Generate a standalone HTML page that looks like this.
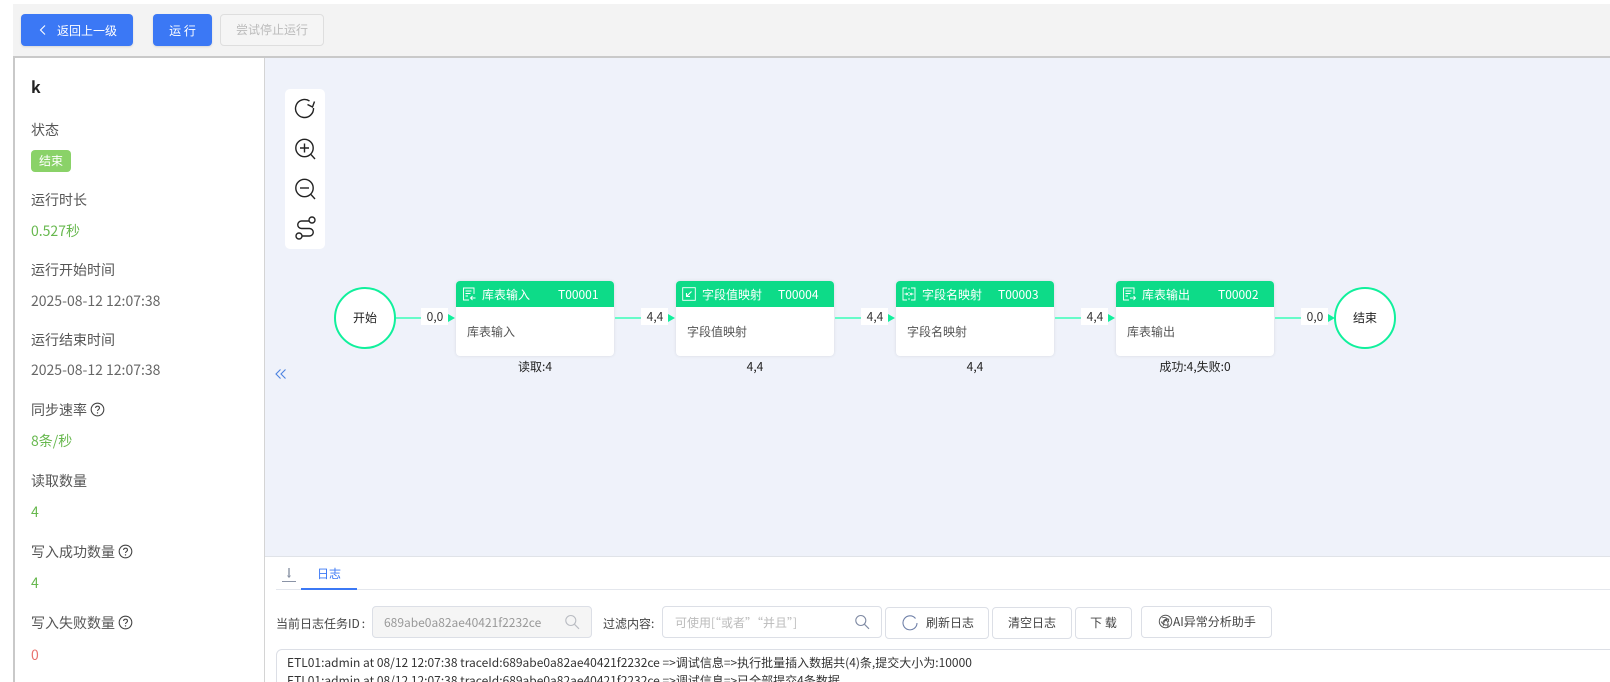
<!DOCTYPE html>
<html lang="zh">
<head>
<meta charset="utf-8">
<title>k</title>
<style>
html,body{margin:0;padding:0;background:#fff;width:1610px;height:682px;overflow:hidden;}
body{font-family:"Noto Sans CJK SC","Liberation Sans",sans-serif;font-size:14px;color:#333;}
#wrap{position:absolute;left:0;top:0;width:1610px;height:682px;overflow:hidden;contain:paint;}
.a{position:absolute;box-sizing:border-box;}
.t{position:absolute;white-space:nowrap;line-height:20px;height:20px;}
.btn{position:absolute;box-sizing:border-box;border-radius:4px;text-align:center;font-size:12px;white-space:nowrap;}
.pri{background:#3b78f5;color:#fff;height:32px;top:14px;line-height:33px;box-shadow:0 1px 2px rgba(0,0,0,.12);}
.def{background:#fff;border:1px solid #dcdfe6;color:#444;height:32px;line-height:30px;}
.lab{color:#555;font-size:14px;left:31px;}
.val{color:#67b84e;font-size:14px;left:31px;}
.dat{color:#666;font-size:14px;left:31px;}
.node{position:absolute;top:281px;width:158px;height:75px;background:#fff;border-radius:4px;box-shadow:0 0 3px rgba(0,0,0,.1);}
.head{position:absolute;left:0;top:0;width:158px;height:26px;background:#0ddb88;border-radius:4px 4px 0 0;color:#fff;font-size:12px;line-height:27px;}
.head span{position:absolute;white-space:nowrap;top:0;}
.body{position:absolute;left:11px;top:42px;font-size:12px;color:#555;line-height:18px;white-space:nowrap;}
.cnt{position:absolute;top:358px;font-size:12px;color:#222;width:158px;text-align:center;line-height:18px;white-space:nowrap;}
.circ{position:absolute;box-sizing:border-box;width:62px;height:62px;top:287px;border:2.5px solid #10f09c;border-radius:50%;background:#fff;text-align:center;line-height:57px;font-size:12px;color:#222;}
.line{position:absolute;height:2px;top:317px;background:#66fbc8;}
.elab{position:absolute;top:308px;height:17px;background:#fff;text-align:center;font-size:12px;line-height:18px;color:#333;padding-left:1px;box-sizing:border-box;}
.arr{position:absolute;top:314px;width:0;height:0;border-left:7px solid #10f09c;border-top:4px solid transparent;border-bottom:4px solid transparent;}
.ic{position:absolute;}
.q{position:absolute;}
</style>
</head>
<body>
<div id="wrap">
<div class="a" style="left:13px;top:4px;width:1597px;height:52px;background:#f3f3f3;"></div>
<div class="a" style="left:13px;top:56px;width:1597px;height:2px;background:#c9c9c9;"></div>

<div class="btn pri" style="left:21px;width:112px;">
  <svg class="ic" style="left:16px;top:10px" width="12" height="12" viewBox="0 0 12 12"><path d="M8 1.500 3.500 6 8 10.500" fill="none" stroke="#fff" stroke-width="1.100"/></svg>
  <span style="position:absolute;left:36px;top:0;">返回上一级</span>
</div>
<div class="btn pri" style="left:153px;width:59px;">运 行</div>
<div class="btn" style="left:220px;top:14px;width:104px;height:32px;line-height:30px;border:1px solid #dedede;background:#f5f5f5;color:#bbb;">尝试停止运行</div>

<!-- side panel -->
<div class="a" style="left:13px;top:58px;width:2px;height:624px;background:#c9c9c9;"></div>
<div class="a" style="left:15px;top:58px;width:249px;height:624px;background:#fff;"></div>
<div class="a" style="left:264px;top:58px;width:1px;height:624px;background:#d4d4d4;"></div>

<div class="t" style="left:31px;top:76px;font-size:16px;font-weight:700;color:#222;">k</div>
<div class="t lab" style="top:120px;">状态</div>
<div class="a" style="left:31px;top:150px;width:40px;height:22px;background:#8ad268;border-radius:4px;color:#fff;font-size:12px;text-align:center;line-height:22px;">结束</div>
<div class="t lab" style="top:190px;">运行时长</div>
<div class="t val" style="top:221px;">0.527秒</div>
<div class="t lab" style="top:260px;">运行开始时间</div>
<div class="t dat" style="top:291px;">2025-08-12 12:07:38</div>
<div class="t lab" style="top:330px;">运行结束时间</div>
<div class="t dat" style="top:360px;">2025-08-12 12:07:38</div>
<div class="t lab" style="top:400px;">同步速率</div>
<svg class="q" style="left:90px;top:402px" width="15" height="15" viewBox="0 0 15 15"><circle cx="7.500" cy="7.500" r="6.300" fill="none" stroke="#444" stroke-width="1.100"/><path d="M5.600 6c0-2.400 3.900-2.400 3.900 0 0 1.400-2 1.400-2 3" fill="none" stroke="#444" stroke-width="1.100"/><circle cx="7.500" cy="10.900" r=".7" fill="#444"/></svg>
<div class="t val" style="top:431px;">8条/秒</div>
<div class="t lab" style="top:471px;">读取数量</div>
<div class="t val" style="top:502px;">4</div>
<div class="t lab" style="top:542px;">写入成功数量</div>
<svg class="q" style="left:118px;top:544px" width="15" height="15" viewBox="0 0 15 15"><circle cx="7.500" cy="7.500" r="6.300" fill="none" stroke="#444" stroke-width="1.100"/><path d="M5.600 6c0-2.400 3.900-2.400 3.900 0 0 1.400-2 1.400-2 3" fill="none" stroke="#444" stroke-width="1.100"/><circle cx="7.500" cy="10.900" r=".7" fill="#444"/></svg>
<div class="t val" style="top:573px;">4</div>
<div class="t lab" style="top:613px;">写入失败数量</div>
<svg class="q" style="left:118px;top:615px" width="15" height="15" viewBox="0 0 15 15"><circle cx="7.500" cy="7.500" r="6.300" fill="none" stroke="#444" stroke-width="1.100"/><path d="M5.600 6c0-2.400 3.900-2.400 3.900 0 0 1.400-2 1.400-2 3" fill="none" stroke="#444" stroke-width="1.100"/><circle cx="7.500" cy="10.900" r=".7" fill="#444"/></svg>
<div class="t" style="left:31px;top:645px;color:#e8736f;">0</div>

<!-- canvas -->
<div class="a" style="left:265px;top:58px;width:1345px;height:498px;background:#eff2fa;"></div>
<div class="a" style="left:265px;top:556px;width:1345px;height:1px;background:#e0e3e8;"></div>

<div class="a" style="left:285px;top:89px;width:40px;height:160px;background:#fff;border-radius:5px;"></div>
<svg class="ic" style="left:285px;top:89px" width="40" height="160" viewBox="0 0 40 160" fill="none" stroke="#222" stroke-width="1.400">
  <path d="M28.500 19A9 9 0 1 1 24.500 12"/><path d="M22.500 15.500 27.500 18l2-5.500"/>
  <circle cx="19.500" cy="59" r="8.700"/><path d="M15 59h9M19.500 54.500v9"/><path d="M25.800 65.300 30 70"/>
  <circle cx="19.500" cy="99" r="8.700"/><path d="M15 99h9"/><path d="M25.800 105.300 30 110"/>
  <circle cx="27" cy="131" r="3"/><circle cx="14" cy="147" r="3"/>
  <path d="M24 132h-7.500a3.700 3.700 0 0 0 0 7.500h8a3.700 3.700 0 0 1 0 7.500H17"/>
</svg>

<svg class="ic" style="left:274px;top:367px" width="14" height="14" viewBox="0 0 14 14" fill="none" stroke="#4b82e0" stroke-width="1.100"><path d="M6.500 2.500 2 7l4.500 4.500M11.500 2.500 7 7l4.500 4.500"/></svg>

<!-- flow -->
<div class="circ" style="left:334px;">开始</div>
<div class="line" style="left:396px;width:26px;"></div>
<div class="elab" style="left:421px;width:27px;">0,0</div>
<div class="arr" style="left:448px;"></div>

<div class="node" style="left:456px;">
  <div class="head">
    <svg class="ic" style="left:6px;top:6px" width="14" height="14" viewBox="0 0 14 14" fill="none" stroke="#fff" stroke-width=".9"><path d="M12 7V1H1.500v12H7"/><path d="M3.500 4h6M3.500 6.500h5M3.500 9h2.500"/><path d="M13.500 11H8.500M10.500 9l-2 2 2 2"/></svg>
    <span style="left:26px;">库表输入</span><span style="left:102px;">T00001</span>
  </div>
  <div class="body">库表输入</div>
</div>
<div class="cnt" style="left:456px;">读取:4</div>

<div class="line" style="left:615px;width:27px;"></div>
<div class="elab" style="left:641px;width:27px;">4,4</div>
<div class="arr" style="left:668px;"></div>

<div class="node" style="left:676px;">
  <div class="head">
    <svg class="ic" style="left:6px;top:6px" width="14" height="14" viewBox="0 0 14 14" fill="none" stroke="#fff" stroke-width=".9"><rect x=".7" y=".7" width="12.600" height="12.600"/><path d="M9.500 4.500 4.500 9.500M4.500 6v3.500H8" stroke-width="1.100"/></svg>
    <span style="left:26px;">字段值映射</span><span style="left:102px;">T00004</span>
  </div>
  <div class="body">字段值映射</div>
</div>
<div class="cnt" style="left:676px;">4,4</div>

<div class="line" style="left:835px;width:27px;"></div>
<div class="elab" style="left:861px;width:27px;">4,4</div>
<div class="arr" style="left:888px;"></div>

<div class="node" style="left:896px;">
  <div class="head">
    <svg class="ic" style="left:6px;top:6px" width="14" height="14" viewBox="0 0 14 14" fill="none" stroke="#fff" stroke-width=".9"><path d="M5 1H1v12h4M9 1h4v12H9"/><path d="M7 1v2M7 5v1M7 8v1M7 11v2"/><path d="M2.500 7H5.500M8.500 7h3" stroke-width="1.100"/><path d="M4.500 5.800 5.800 7 4.500 8.200M9.500 5.800 8.200 7 9.500 8.200"/></svg>
    <span style="left:26px;">字段名映射</span><span style="left:102px;">T00003</span>
  </div>
  <div class="body">字段名映射</div>
</div>
<div class="cnt" style="left:896px;">4,4</div>

<div class="line" style="left:1055px;width:27px;"></div>
<div class="elab" style="left:1081px;width:27px;">4,4</div>
<div class="arr" style="left:1108px;"></div>

<div class="node" style="left:1116px;">
  <div class="head">
    <svg class="ic" style="left:6px;top:6px" width="14" height="14" viewBox="0 0 14 14" fill="none" stroke="#fff" stroke-width=".9"><path d="M12 7V1H1.500v12H7"/><path d="M3.500 4h6M3.500 6.500h5M3.500 9h2.500"/><path d="M8 11h5.500M11.500 9l2 2-2 2"/></svg>
    <span style="left:26px;">库表输出</span><span style="left:102px;">T00002</span>
  </div>
  <div class="body">库表输出</div>
</div>
<div class="cnt" style="left:1116px;">成功:4,失败:0</div>

<div class="line" style="left:1275px;width:27px;"></div>
<div class="elab" style="left:1301px;width:27px;">0,0</div>
<div class="arr" style="left:1328px;"></div>
<div class="circ" style="left:1334px;">结束</div>

<!-- log -->
<svg class="ic" style="left:282px;top:567px" width="14" height="16" viewBox="0 0 14 16" fill="none" stroke="#8a93a6"><path d="M7 1v9" stroke-width="1.400"/><path d="M5.500 8.500 7 10.500l1.500-2" stroke-width=".8"/><path d="M0 14.500h14"/></svg>
<div class="t" style="left:317px;top:564px;color:#3b78f5;font-size:12px;">日志</div>
<div class="a" style="left:276px;top:589px;width:1334px;height:1px;background:#e4e7ed;"></div>
<div class="a" style="left:301px;top:588px;width:56px;height:2px;background:#3b78f5;"></div>

<div class="t" style="left:276px;top:614px;font-size:12px;color:#444;">当前日志任务ID<span style="margin-left:2px;">:</span></div>
<div class="a" style="left:372px;top:606px;width:220px;height:32px;background:#f5f5f5;border:1px solid #dcdfe6;border-radius:4px;"></div>
<div class="t" style="left:384px;top:613px;font-size:12px;color:#999;">689abe0a82ae40421f2232ce</div>
<svg class="ic" style="left:564px;top:614px" width="16" height="16" viewBox="0 0 16 16" fill="none" stroke="#b9bcc2" stroke-width="1.100"><circle cx="6.800" cy="6.500" r="5"/><path d="m10.500 10.300 4.500 4.500"/></svg>

<div class="t" style="left:603px;top:614px;font-size:12px;color:#444;">过滤内容:</div>
<div class="a" style="left:662px;top:606px;width:220px;height:32px;background:#fff;border:1px solid #dcdfe6;border-radius:4px;"></div>
<div class="t" style="left:675px;top:613px;font-size:12px;color:#bbb;">可使用[“或者”“并且”]</div>
<svg class="ic" style="left:854px;top:614px" width="16" height="16" viewBox="0 0 16 16" fill="none" stroke="#7f8aa3" stroke-width="1.100"><circle cx="6.800" cy="6.500" r="5"/><path d="m10.500 10.300 4.500 4.500"/></svg>

<div class="btn def" style="left:885px;top:607px;width:104px;">
  <svg class="ic" style="left:16px;top:7px" width="16" height="16" viewBox="0 0 16 16" fill="none" stroke="#6f80a8" stroke-width="1.100"><path d="M13.500 3.500A7 7 0 1 0 15 8"/></svg>
  <span style="position:absolute;left:40px;top:0;">刷新日志</span>
</div>
<div class="btn def" style="left:992px;top:607px;width:80px;">清空日志</div>
<div class="btn def" style="left:1075px;top:607px;width:57px;">下 载</div>
<div class="btn def" style="left:1141px;top:606px;width:131px;">
  <svg class="ic" style="left:16px;top:7px" width="15" height="15" viewBox="0 0 14 14" fill="none" stroke="#555" stroke-width=".9"><circle cx="7" cy="7" r="5.800"/><path d="M4 3.500c3-1 6 1 6 4M10.500 5c-2-1-5 0-6 3M3 7c1 2.500 4 4 7 3M5 11c0-2 1-5 4-6.500M9 12c1-2 .5-5-2-7"/></svg>
  <span style="position:absolute;left:31px;top:0;">AI异常分析助手</span>
</div>

<div class="a" style="left:276px;top:649px;width:1340px;height:50px;border:1px solid #dcdfe6;border-radius:6px;background:#fff;"></div>
<div class="t" style="left:287px;top:653px;font-size:12px;color:#333;">ETL01:admin at 08/12 12:07:38 traceId:689abe0a82ae40421f2232ce =&gt;调试信息=&gt;执行批量插入数据共(4)条,提交大小为:10000</div>
<div class="t" style="left:287px;top:671px;font-size:12px;color:#333;">ETL01:admin at 08/12 12:07:38 traceId:689abe0a82ae40421f2232ce =&gt;调试信息=&gt;已全部提交4条数据</div>
</div>
</body>
</html>
